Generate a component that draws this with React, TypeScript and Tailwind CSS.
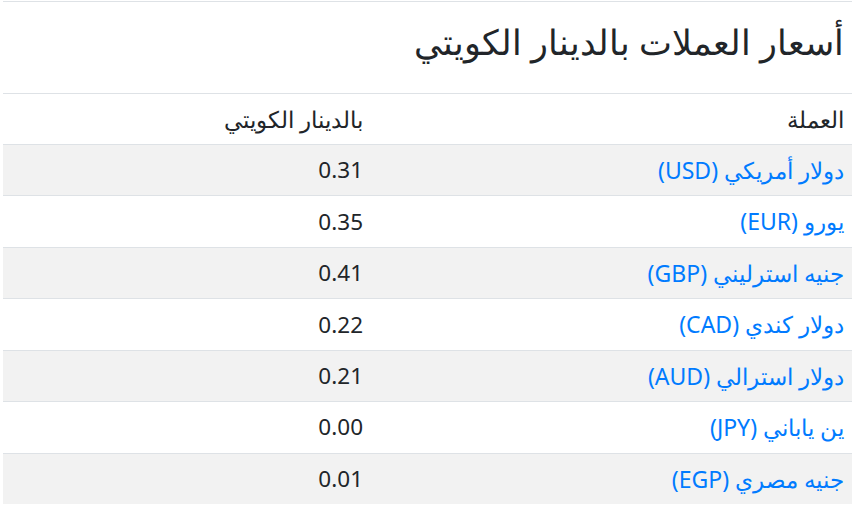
const rates = [
  { name: 'دولار أمريكي', code: 'USD', value: '0.31' },
  { name: 'يورو', code: 'EUR', value: '0.35' },
  { name: 'جنيه استرليني', code: 'GBP', value: '0.41' },
  { name: 'دولار كندي', code: 'CAD', value: '0.22' },
  { name: 'دولار استرالي', code: 'AUD', value: '0.21' },
  { name: 'ين ياباني', code: 'JPY', value: '0.00' },
  { name: 'جنيه مصري', code: 'EGP', value: '0.01' },
]

export default function App() {
  return (
    <div dir="rtl" className="min-h-screen bg-white px-[3px] pt-px font-['Noto_Sans',sans-serif] text-[#212529]">
      <table className="w-full border-collapse text-right">
        <thead>
          <tr>
            <th colSpan={2} className="h-[92px] border-t border-[#dee2e6] px-2 pb-[10px] align-middle text-[35px] font-normal">
              أسعار العملات بالدينار الكويتي
            </th>
          </tr>
          <tr>
            <th className="h-[51px] w-[481px] border-t border-[#dee2e6] px-2 text-[23px] font-normal">العملة</th>
            <th className="h-[51px] border-t border-[#dee2e6] px-2 text-[23px] font-normal">بالدينار الكويتي</th>
          </tr>
        </thead>
        <tbody>
          {rates.map((r, i) => (
            <tr key={r.code} className={i % 2 === 0 ? 'bg-[#f2f2f2]' : ''}>
              <td className="h-[51.43px] border-t border-[#dee2e6] px-2 text-[23px]">
                <a href="#" className="text-[#007bff]">
                  {r.name} ({r.code})
                </a>
              </td>
              <td className="h-[51.43px] border-t border-[#dee2e6] px-2 text-[22.5px]">{r.value}</td>
            </tr>
          ))}
        </tbody>
      </table>
    </div>
  )
}
